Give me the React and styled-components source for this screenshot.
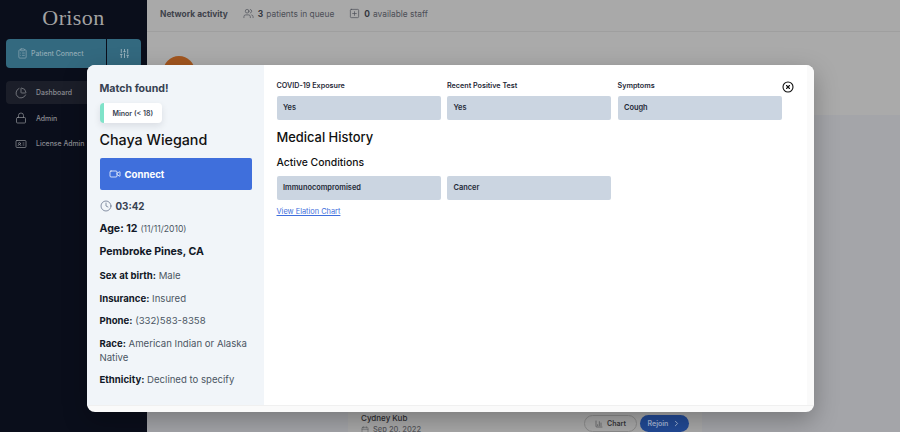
import React from 'react'
import styled, { createGlobalStyle } from 'styled-components'
import { ClipboardList, SlidersVertical, ChartPie, Lock, IdCard, Video, Clock, Users, SquarePlus, CircleX, Calendar, ChartColumn, ChevronRight } from 'lucide-react'

const Global = createGlobalStyle`
	html, body {
		margin: 0;
		height: 100%;
		overflow: hidden;
	}
	body {
		font-family: Inter, "Noto Sans", sans-serif;
		background: #0b0f1c;
	}
`

const Page = styled.div`
	position: relative;
	display: flex;
	width: 900px;
	height: 432px;
	overflow: hidden;
`

const Sidebar = styled.aside`
	width: 147px;
	flex: none;
	background: #0a0e1b;
	padding: 0 6px;
	box-sizing: border-box;
`

const Logo = styled.div`
	font-family: "Liberation Serif", serif;
	font-size: 22px;
	letter-spacing: 0.4px;
	color: #a3a3a3;
	text-align: center;
	height: 39px;
	line-height: 35px;
`

const ConnectRow = styled.div`
	display: flex;
	gap: 1px;
	height: 29px;
	margin-bottom: 13px;
`

const ConnectMain = styled.div`
	flex: 1;
	display: flex;
	align-items: center;
	gap: 3px;
	padding-left: 11px;
	background: #33697f;
	border-radius: 4px 0 0 4px;
	color: #8fa9b5;
	font-size: 6.9px;
	font-weight: 500;
`

const ConnectSide = styled.div`
	width: 34px;
	display: flex;
	align-items: center;
	justify-content: center;
	background: #33697f;
	border-radius: 0 4px 4px 0;
	color: #9db4be;
`

const NavItem = styled.div`
	display: flex;
	align-items: center;
	gap: 9px;
	height: 23px;
	margin-bottom: 2.5px;
	padding-left: 9px;
	border-radius: 4px;
	font-size: 6.9px;
	font-weight: 500;
	color: #8a8c92;
	background: ${p => (p.$active ? '#1b1e29' : 'transparent')};
`

const Main = styled.main`
	flex: 1;
	display: flex;
	flex-direction: column;
	background: #a4a5a9;
`

const TopBar = styled.header`
	height: 27px;
	flex: none;
	display: flex;
	align-items: center;
	padding: 0 0 4px 13px;
	gap: 15px;
	background: #a9a9a9;
	border-bottom: 1px solid #9f9f9f;
	color: #3e424b;
	font-size: 8.4px;
`

const BarTitle = styled.span`
	font-weight: 700;
`

const BarStat = styled.span`
	display: flex;
	align-items: center;
	gap: 4px;
	color: #4c4f57;

	b {
		color: #33363e;
		font-weight: 700;
		margin-right: -1px;
	}
`

const Hero = styled.div`
	height: 83px;
	flex: none;
	padding: 24px 0 0 16px;
	box-sizing: border-box;
	background: #aaaaaa;
`

const Avatar = styled.div`
	width: 32px;
	height: 32px;
	border-radius: 50%;
	background: #a2561f;
`

const Lower = styled.div`
	flex: 1;
	display: flex;
	justify-content: flex-end;
	align-items: flex-end;
	padding-right: 198px;
	background: #a4a5a9;
`

const VisitCard = styled.div`
	width: 354px;
	height: 60px;
	box-sizing: border-box;
	padding: 41px 0 0 13px;
	display: flex;
	background: #a9a9a9;
	color: #2c2c30;
`

const VisitText = styled.div`
	width: 223px;
	font-size: 8px;
	font-weight: 500;
	line-height: 10px;
`

const VisitDate = styled.div`
	display: flex;
	align-items: center;
	gap: 4px;
	margin-top: 2px;
	font-size: 7.5px;
	color: #55565b;
`

const PillRow = styled.div`
	display: flex;
	gap: 3px;
	margin-top: 2px;
`

const Pill = styled.div`
	display: flex;
	align-items: center;
	justify-content: center;
	gap: 4px;
	width: ${p => (p.$primary ? 49 : 53)}px;
	height: 17px;
	box-sizing: border-box;
	border-radius: 9px;
	font-size: 7px;
	font-weight: 600;
	border: ${p => (p.$primary ? 'none' : '1px solid #8c8c8c')};
	background: ${p => (p.$primary ? '#224a96' : 'transparent')};
	color: ${p => (p.$primary ? '#a4b5d6' : '#35363a')};
`

const Modal = styled.div`
	position: absolute;
	left: 87px;
	top: 65px;
	width: 727px;
	height: 347px;
	display: flex;
	flex-direction: column;
	border-radius: 8px;
	overflow: hidden;
	background: #fafafa;
	box-shadow: 0 8px 24px rgba(0, 0, 0, 0.28);
`

const ModalBody = styled.div`
	height: 341px;
	flex: none;
	display: flex;
	border-bottom: 1px solid #f0f0f0;
	box-sizing: border-box;
`

const Details = styled.section`
	width: 177px;
	flex: none;
	box-sizing: border-box;
	padding: 17px 0 0 12.5px;
	background: #f1f5f9;
`

const MatchTitle = styled.div`
	font-size: 10.6px;
	font-weight: 700;
	line-height: 14px;
	color: #374151;
`

const Badge = styled.div`
	display: inline-flex;
	align-items: center;
	width: 62px;
	height: 20px;
	margin-top: 7px;
	padding-left: 9px;
	box-sizing: border-box;
	border-left: 4px solid #7fe3c9;
	border-radius: 4px;
	background: #fff;
	box-shadow: 0 3px 7px rgba(15, 23, 42, 0.1);
	font-size: 7px;
	font-weight: 600;
	white-space: nowrap;
	color: #374151;
`

const PatientName = styled.h2`
	margin: 7px 0 0;
	font-size: 14.3px;
	font-weight: 500;
	line-height: 20px;
	color: #111;
`

const ConnectButton = styled.div`
	display: flex;
	align-items: center;
	gap: 4px;
	width: 152px;
	height: 32px;
	margin-top: 8px;
	padding-left: 9px;
	box-sizing: border-box;
	border-radius: 2px;
	background: #3f6fdc;
	color: #fff;
	font-size: 9.6px;
	font-weight: 700;
`

const Timer = styled.div`
	display: flex;
	align-items: center;
	gap: 4px;
	margin-top: 9px;
	height: 14px;
	font-size: 9.8px;
	font-weight: 700;
	color: #374151;

	svg {
		color: #64708a;
	}
`

const Fact = styled.div`
	font-size: ${p => (p.$big ? '10.6px' : '9.6px')};
	line-height: 14.4px;
	margin-top: ${p => (p.$big ? '8.6px' : '8px')};
	color: #4b5563;
	font-weight: 400;

	b {
		color: #111827;
		font-weight: 700;
	}

	small {
		font-size: 8.6px;
	}
`

const SexFact = styled(Fact)`
	margin-top: 10.3px;
`

const Content = styled.section`
	flex: 1;
	position: relative;
	background: #fff;
	padding: 15px 0 0 12.5px;
`

const ThreeCols = styled.div`
	display: grid;
	grid-template-columns: repeat(3, 164px);
	gap: 6.5px;
	width: 505px;
`

const Field = styled.div`
	label {
		display: block;
		font-size: 7.2px;
		font-weight: 600;
		line-height: 12px;
		margin-bottom: 4px;
		color: #1f2937;
	}
`

const Value = styled.div`
	height: 23.5px;
	display: flex;
	align-items: center;
	padding-left: 6.5px;
	border-radius: 2px;
	background: #cbd5e1;
	font-size: 7.4px;
	font-weight: 600;
	color: #1f2937;
`

const Heading = styled.h3`
	margin: 9.5px 0 0;
	font-size: 12.9px;
	font-weight: 500;
	line-height: 18px;
	color: #111;
`

const SubHeading = styled.h4`
	margin: 9px 0 0;
	font-size: 10.4px;
	font-weight: 500;
	line-height: 14px;
	color: #111;
`

const ConditionGrid = styled(ThreeCols)`
	margin-top: 6px;
`

const ChartLink = styled.a`
	display: block;
	margin-top: 5px;
	font-size: 7.4px;
	line-height: 14px;
	color: #3f6fdc;
	text-decoration: underline;
`

const CloseButton = styled.div`
	position: absolute;
	top: 16px;
	right: 13px;
	display: flex;
	color: #111;
`

const ScrollTrack = styled.div`
	width: 7px;
	flex: none;
	background: #fafafa;
`

const App = () => (
	<Page>
		<Global />
		<Sidebar>
			<Logo>Orison</Logo>
			<ConnectRow>
				<ConnectMain>
					<ClipboardList size={11} strokeWidth={1.5} />
					Patient Connect
				</ConnectMain>
				<ConnectSide>
					<SlidersVertical size={11} strokeWidth={2} />
				</ConnectSide>
			</ConnectRow>
			<NavItem $active>
				<ChartPie size={12} strokeWidth={1.5} />
				Dashboard
			</NavItem>
			<NavItem>
				<Lock size={12} strokeWidth={1.5} />
				Admin
			</NavItem>
			<NavItem>
				<IdCard size={12} strokeWidth={1.5} />
				License Admin
			</NavItem>
		</Sidebar>
		<Main>
			<TopBar>
				<BarTitle>Network activity</BarTitle>
				<BarStat>
					<Users size={11} strokeWidth={1.5} />
					<b>3</b> patients in queue
				</BarStat>
				<BarStat>
					<SquarePlus size={11} strokeWidth={1.5} />
					<b>0</b> available staff
				</BarStat>
			</TopBar>
			<Hero>
				<Avatar />
			</Hero>
			<Lower>
				<VisitCard>
					<VisitText>
						Cydney Kub
						<VisitDate>
							<Calendar size={8} strokeWidth={1.5} />
							Sep 20, 2022
						</VisitDate>
					</VisitText>
					<PillRow>
						<Pill>
							<ChartColumn size={8} strokeWidth={1.5} />
							Chart
						</Pill>
						<Pill $primary>
							Rejoin
							<ChevronRight size={9} strokeWidth={2.5} />
						</Pill>
					</PillRow>
				</VisitCard>
			</Lower>
		</Main>
		<Modal>
			<ModalBody>
				<Details>
					<MatchTitle>Match found!</MatchTitle>
					<Badge>Minor (&lt; 18)</Badge>
					<PatientName>Chaya Wiegand</PatientName>
					<ConnectButton>
						<Video size={12} strokeWidth={1.5} />
						Connect
					</ConnectButton>
					<Timer>
						<Clock size={12} strokeWidth={1.5} />
						03:42
					</Timer>
					<Fact $big>
						<b>Age: 12</b> <small>(11/11/2010)</small>
					</Fact>
					<Fact $big>
						<b>Pembroke Pines, CA</b>
					</Fact>
					<SexFact>
						<b>Sex at birth:</b> Male
					</SexFact>
					<Fact>
						<b>Insurance:</b> Insured
					</Fact>
					<Fact>
						<b>Phone:</b> (332)583-8358
					</Fact>
					<Fact>
						<b>Race:</b> American Indian or Alaska
						<br />
						Native
					</Fact>
					<Fact>
						<b>Ethnicity:</b> Declined to specify
					</Fact>
				</Details>
				<Content>
					<ThreeCols>
						<Field>
							<label>COVID-19 Exposure</label>
							<Value>Yes</Value>
						</Field>
						<Field>
							<label>Recent Positive Test</label>
							<Value>Yes</Value>
						</Field>
						<Field>
							<label>Symptoms</label>
							<Value>Cough</Value>
						</Field>
					</ThreeCols>
					<Heading>Medical History</Heading>
					<SubHeading>Active Conditions</SubHeading>
					<ConditionGrid>
						<Value>Immunocompromised</Value>
						<Value>Cancer</Value>
					</ConditionGrid>
					<ChartLink>View Elation Chart</ChartLink>
					<CloseButton>
						<CircleX size={12} strokeWidth={2.2} />
					</CloseButton>
				</Content>
				<ScrollTrack />
			</ModalBody>
		</Modal>
	</Page>
)

export default App
